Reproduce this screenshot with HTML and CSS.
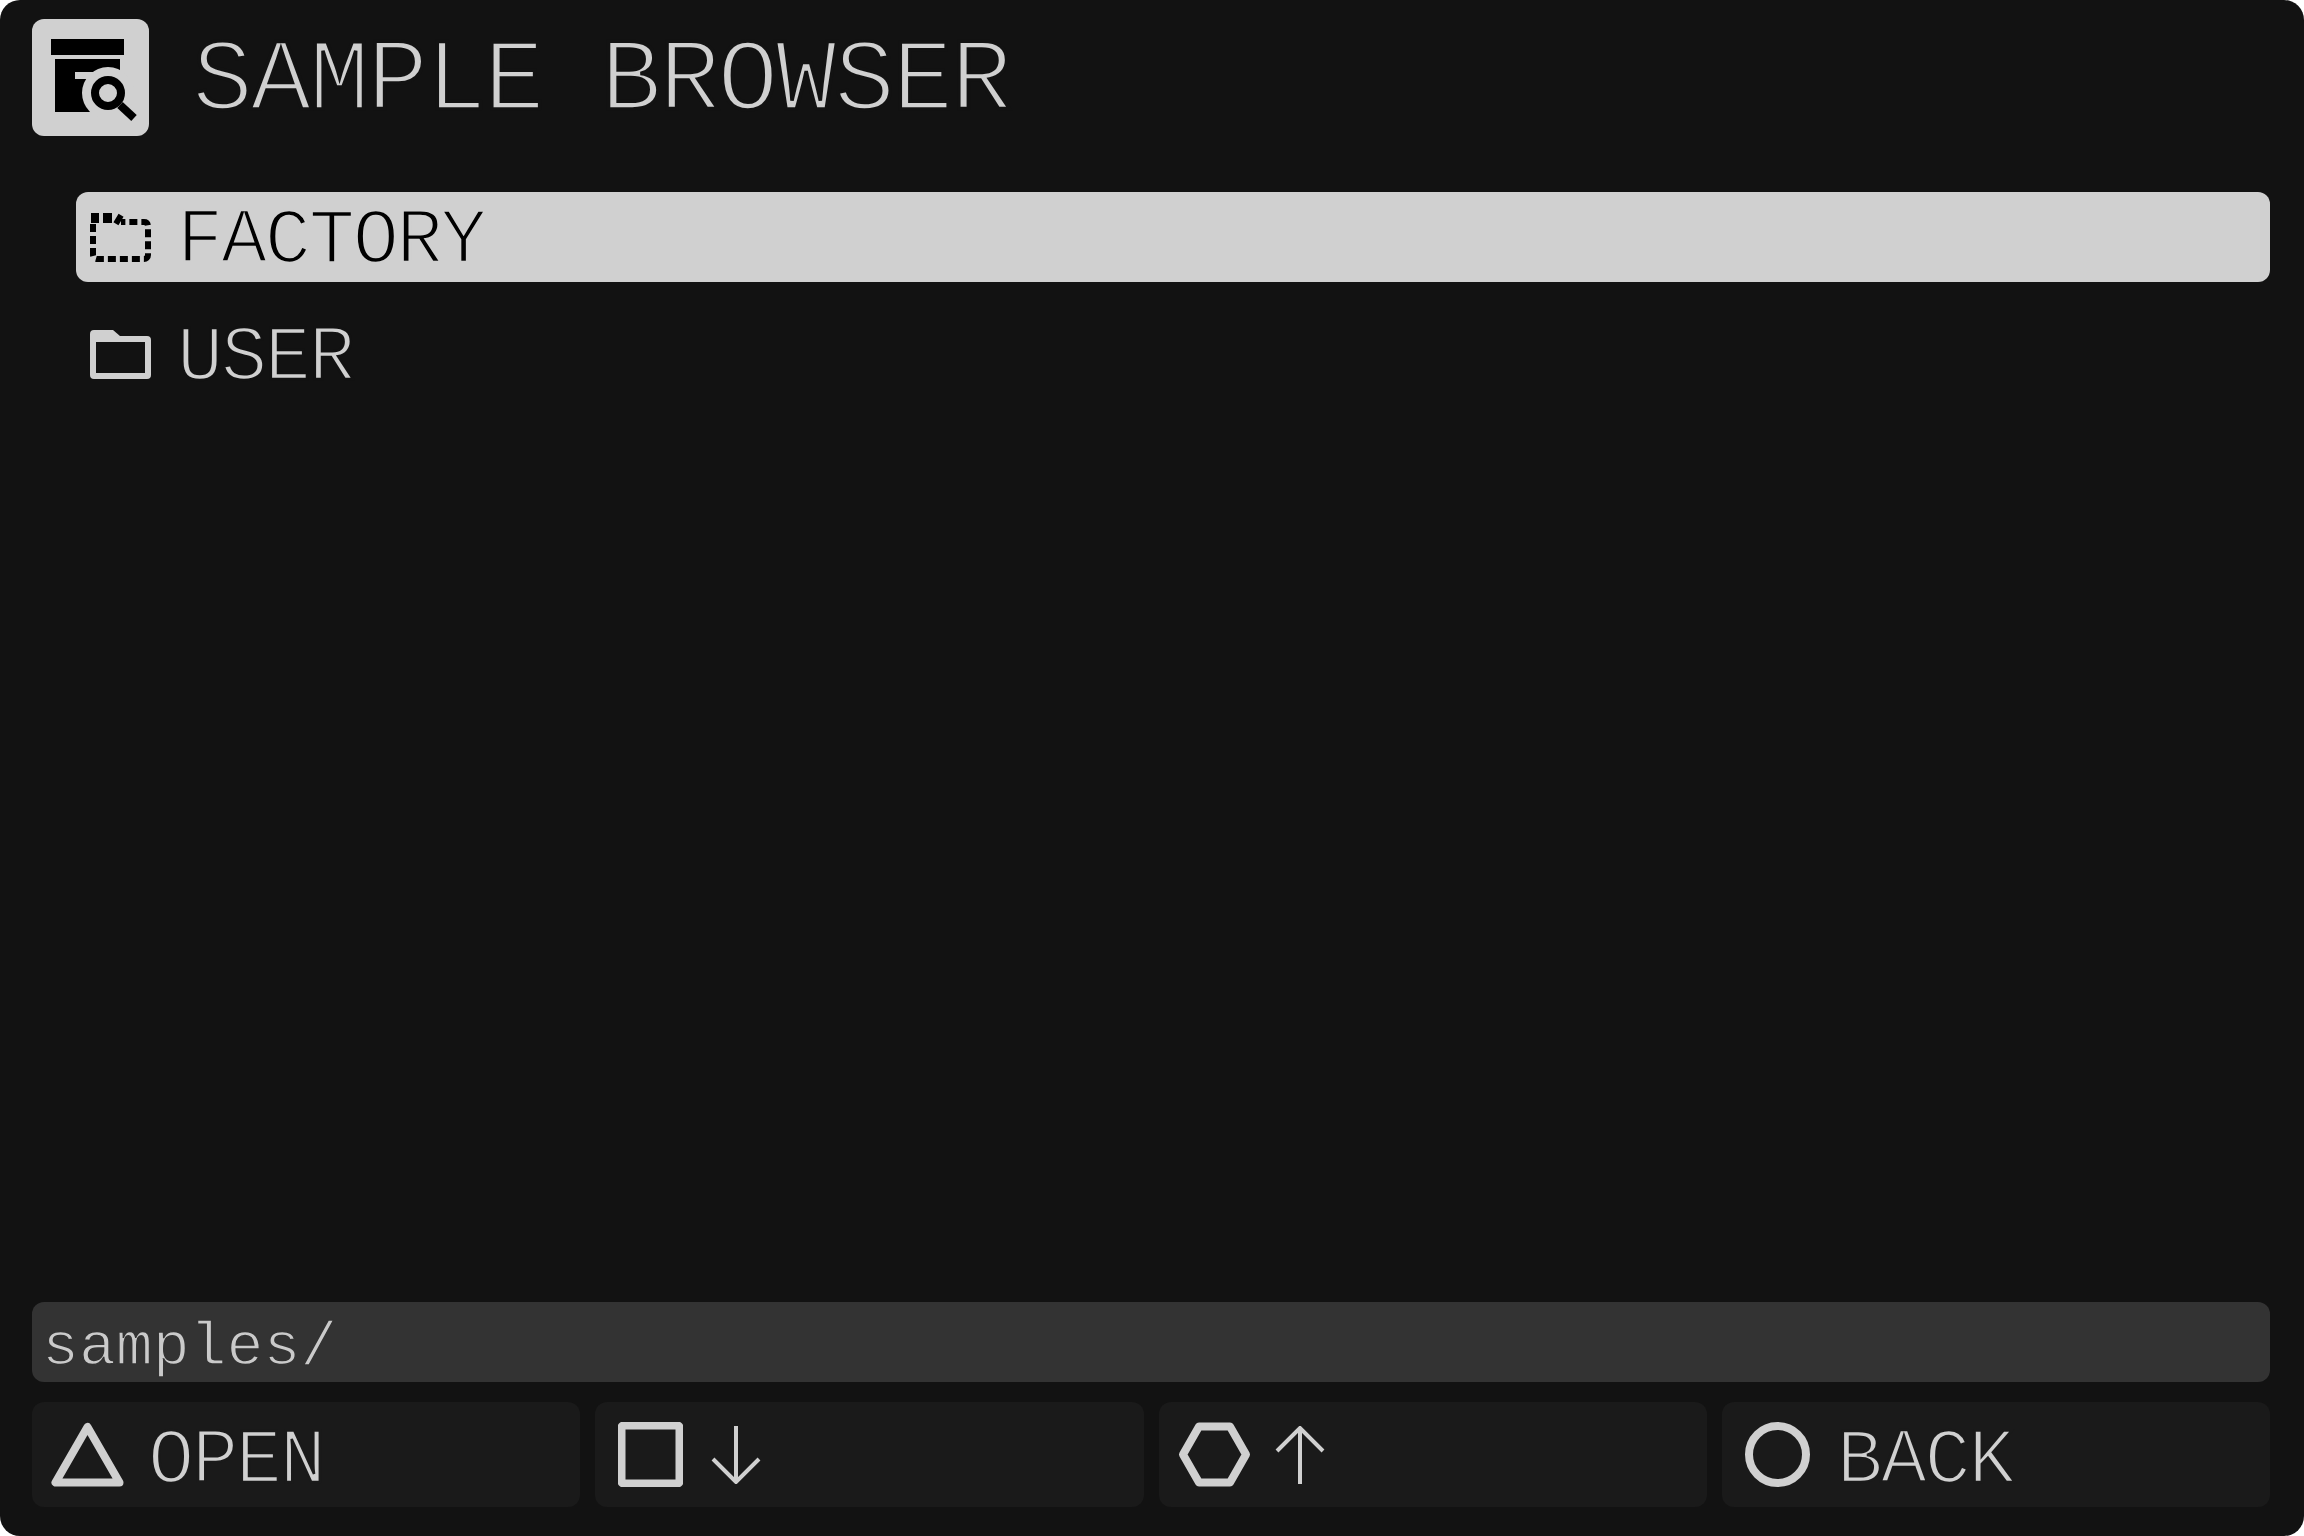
FILE: index.html
```html
<!DOCTYPE html>
<html lang="en">

<head>
    <meta charset="UTF-8">
    <title>Sample Browser</title>
    <link rel="stylesheet" href="styles.css">
</head>

<body>
    <div class="window">
        <header class="header">
            <svg class="app-icon" viewBox="0 0 117 117">
                <rect x="19" y="20" width="73" height="16"/>
                <path d="M23 40h65v53H23z"/>
                <rect x="43" y="53" width="40" height="7" fill="#d0d0d0"/>
                <circle cx="76" cy="74" r="26" fill="#d0d0d0"/>
                <circle cx="76" cy="74" r="13" fill="none" stroke="#000" stroke-width="8"/>
                <path d="M88 86l14 13" fill="none" stroke="#000" stroke-width="8"/>
            </svg>
            <h1 class="title">SAMPLE BROWSER</h1>
        </header>

        <ul class="list">
            <li class="row row-selected">
                <svg class="folder" viewBox="0 0 61 49">
                    <path class="folder-dashed" d="M3 11v31a4 4 0 0 0 4 4h47a4 4 0 0 0 4-4V13a4 4 0 0 0-4-4H31"/>
                    <path class="folder-tab" d="M1 5h8M13 5h9M26 5l5 3"/>
                </svg>
                <span class="label">FACTORY</span>
            </li>
            <li class="row">
                <svg class="folder" viewBox="0 0 61 49">
                    <path class="folder-solid" fill-rule="evenodd" d="M0 4a4 4 0 0 1 4-4h19l7 6h27a4 4 0 0 1 4 4v35a4 4 0 0 1-4 4H4a4 4 0 0 1-4-4zM6 12v31h49V12z"/>
                </svg>
                <span class="label">USER</span>
            </li>
        </ul>

        <div class="path">samples/</div>

        <div class="buttons">
            <div class="button">
                <svg class="shape" viewBox="0 0 73 65">
                    <path d="M36.5 5L4.500 60.500h64z"/>
                </svg>
                <span class="label">OPEN</span>
            </div>
            <div class="button button-wide">
                <svg class="shape shape-square" viewBox="0 0 65 65">
                    <rect x="3.500" y="3.500" width="58" height="58" rx="2"/>
                </svg>
                <svg class="arrow" viewBox="0 0 50 58">
                    <path d="M25 0v56M2 33l23 23 23-23"/>
                </svg>
            </div>
            <div class="button button-hex">
                <svg class="shape" viewBox="0 0 73 65">
                    <path d="M21 4.500h31L68 32.500 52 60.500H21L5 32.500z"/>
                </svg>
                <svg class="arrow" viewBox="0 0 50 58">
                    <path d="M25 58V2M2 25L25 2l23 23"/>
                </svg>
            </div>
            <div class="button button-wide">
                <svg class="shape shape-square" viewBox="0 0 65 65">
                    <circle cx="32.500" cy="32.500" r="28.500"/>
                </svg>
                <span class="label">BACK</span>
            </div>
        </div>
    </div>
</body>

</html>
```

FILE: styles.css
```css
* {
    box-sizing: border-box;
}

html,
body {
    margin: 0;
    height: 100%;
    background: #fff;
}

.window {
    display: flex;
    flex-direction: column;
    height: 1536px;
    padding: 19px 34px 29px 32px;
    background: #121212;
    border-radius: 20px;
    color: #d0d0d0;
    font-family: "Liberation Mono", monospace;
}

.header {
    display: flex;
    align-items: center;
    gap: 43px;
}

.app-icon {
    width: 117px;
    height: 117px;
    background: #d0d0d0;
    border-radius: 12px;
}

.title {
    margin: 0;
    padding-top: 10px;
    font-size: 102px;
    font-weight: normal;
    line-height: 107px;
    letter-spacing: -2.850px;
    -webkit-text-stroke: 3.500px #121212;
}

.list {
    flex: 1;
    margin: 56px 0 0;
    padding: 0 0 0 44px;
    list-style: none;
}

.row {
    display: flex;
    align-items: center;
    gap: 26px;
    height: 90px;
    margin-bottom: 27px;
    padding-left: 14px;
    border-radius: 12px;
    font-size: 77px;
    letter-spacing: -2.300px;
    -webkit-text-stroke: 2.500px #121212;
}

.row-selected {
    background: #d0d0d0;
    color: #000;
    -webkit-text-stroke: 2.500px #d0d0d0;
}

.label {
    padding-top: 8px;
    line-height: 77px;
}

.button .label {
    padding-top: 14px;
}

.folder {
    width: 61px;
    height: 49px;
}

.folder-solid {
    fill: #d0d0d0;
}

.folder-dashed {
    fill: none;
    stroke: #000;
    stroke-width: 6;
    stroke-dasharray: 8 4;
}

.folder-tab {
    fill: none;
    stroke: #000;
    stroke-width: 10;
}

.path {
    height: 80px;
    padding: 8px 0 0 10px;
    background: #333;
    border-radius: 12px;
    color: #cacaca;
    font-size: 61.500px;
    line-height: 76px;
    -webkit-text-stroke: 1.500px #333;
}

.buttons {
    display: grid;
    grid-template-columns: repeat(4, 1fr);
    gap: 15px;
    height: 105px;
    margin-top: 20px;
}

.button {
    display: flex;
    align-items: center;
    gap: 24px;
    padding-left: 19px;
    background: #1a1a1a;
    border-radius: 12px;
    font-size: 77px;
    letter-spacing: -2.300px;
    -webkit-text-stroke: 2.500px #1a1a1a;
}

.button-hex {
    gap: 23px;
}

.button-wide {
    gap: 27px;
    padding-left: 23px;
}

.shape {
    width: 73px;
    height: 65px;
    flex-shrink: 0;
    fill: none;
    stroke: #d0d0d0;
    stroke-width: 8;
    stroke-linejoin: round;
}

.shape-square {
    width: 65px;
}

.arrow {
    width: 50px;
    height: 58px;
    margin-left: 1px;
    fill: none;
    stroke: #d0d0d0;
    stroke-width: 4;
}
```
